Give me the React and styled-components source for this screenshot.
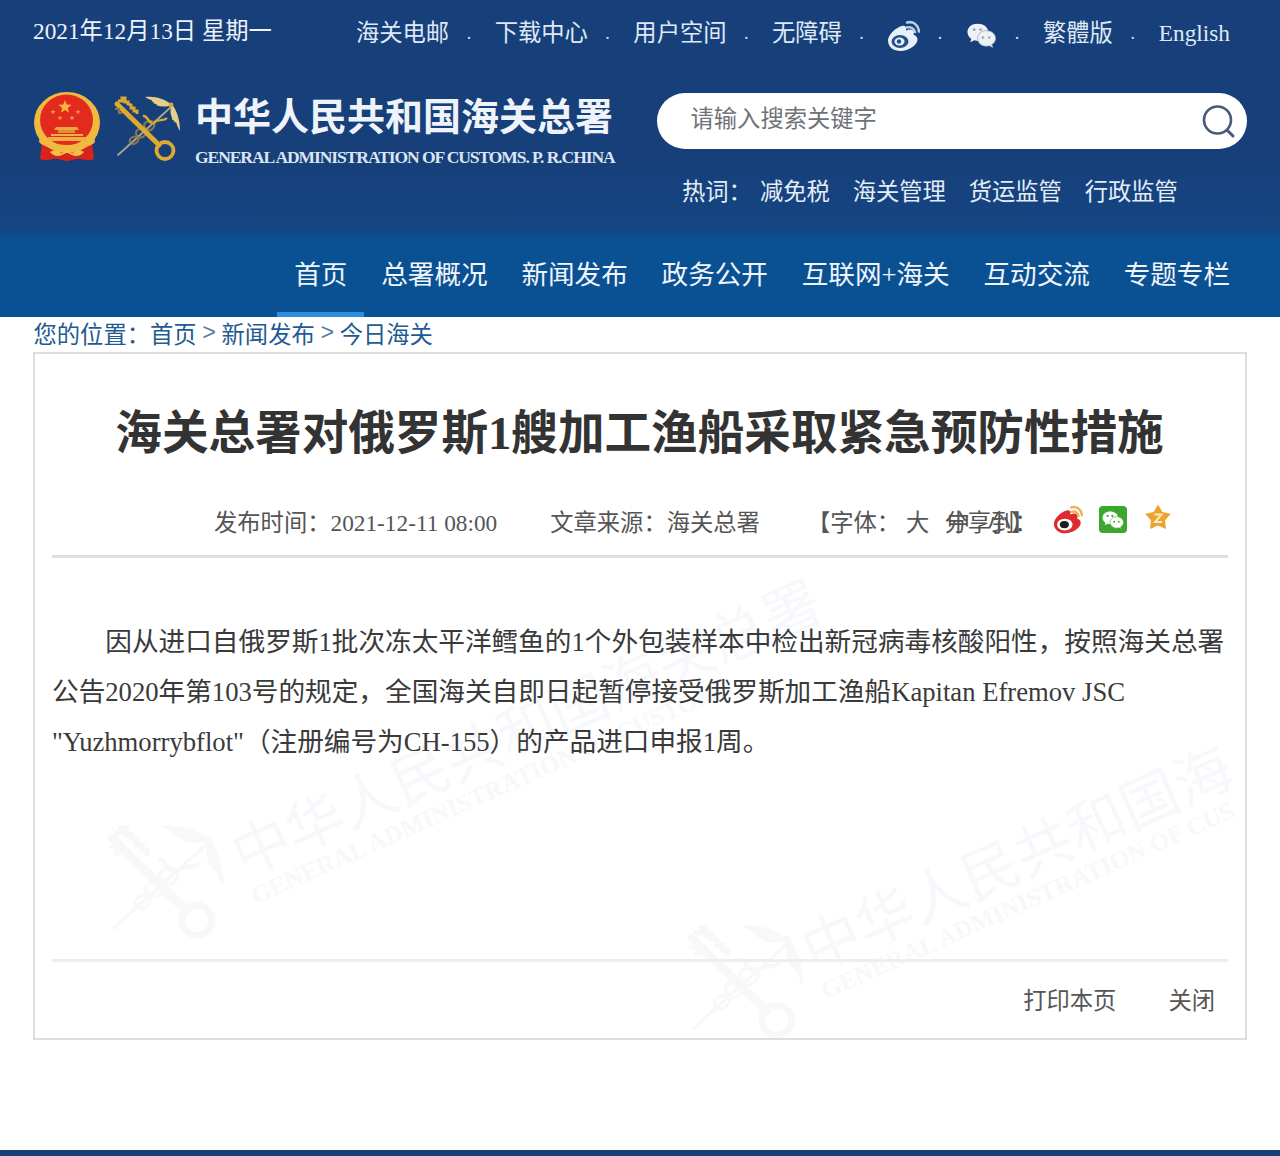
import React from "react";
import styled, { createGlobalStyle } from "styled-components";

const FONT = '"Liberation Serif", "Noto Sans CJK SC", serif';

const Global = createGlobalStyle`
  html, body { margin: 0; padding: 0; background: #fff; }
  body { font-family: ${FONT}; }
  * { box-sizing: border-box; }
`;

const Page = styled.div`
  width: 1280px;
  height: 1156px;
  display: flex;
  flex-direction: column;
  background: #fff;
  overflow: hidden;
`;

const Header = styled.header`
  height: 233px;
  padding: 0 33px;
  display: flex;
  flex-direction: column;
  background: linear-gradient(180deg, #17407b 0%, #17407b 72%, #134683 100%);
`;

const TopRow = styled.div`
  height: 62px;
  display: flex;
  align-items: center;
  justify-content: space-between;
  color: #e4edf7;
  font-size: 23.3px;
`;

const DateText = styled.span`
  color: #eef3f9;
  white-space: nowrap;
  position: relative;
  top: -2px;
`;

const TopLinks = styled.nav`
  display: flex;
  align-items: center;
  margin-right: 17px;
  height: 30px;
`;

const TopLink = styled.a`
  white-space: nowrap;
  color: #dfe9f5;
  display: flex;
  align-items: center;
  position: relative;
  top: ${(p) => p.$dy || 0}px;
`;

const Dot = styled.span`
  width: ${(p) => p.$w || 46}px;
  text-align: center;
  font-size: 18px;
  color: #cfdff0;
  position: relative;
  top: 2px;
  left: -3px;
`;

const BrandRow = styled.div`
  display: flex;
  align-items: flex-start;
  justify-content: space-between;
  padding-top: 28px;
`;

const Brand = styled.div`
  display: flex;
  align-items: flex-start;
`;

const EmblemSvg = styled.svg`
  width: 68px;
  height: 71px;
  margin-top: 2px;
  display: block;
  flex: none;
`;

const KeySvg = styled.svg`
  width: 68px;
  height: 68px;
  margin: 6px 14px 0 12px;
  display: block;
  flex: none;
`;

const BrandText = styled.div`
  display: flex;
  flex-direction: column;
  width: 422px;
`;

const BrandCn = styled.div`
  font-family: "Noto Sans CJK SC", serif;
  font-weight: 700;
  font-size: 38px;
  line-height: 48px;
  color: #eef3f9;
  white-space: nowrap;
`;

const BrandEn = styled.div`
  font-family: "Liberation Serif", serif;
  font-size: 17.5px;
  line-height: 38px;
  font-weight: 700;
  letter-spacing: -1.07px;
  color: #dbe5f1;
  white-space: nowrap;
`;

const SearchColumn = styled.div`
  width: 590px;
  margin-top: 3px;
  display: flex;
  flex-direction: column;
`;

const SearchBox = styled.div`
  height: 56px;
  border-radius: 28px;
  background: #fff;
  display: flex;
  align-items: center;
  justify-content: space-between;
  padding: 0 11px 0 33.5px;
`;

const SearchHint = styled.span`
  font-size: 23.3px;
  color: #6f7378;
  position: relative;
  top: -4px;
`;

const HotRow = styled.div`
  display: flex;
  align-items: center;
  height: 40px;
  margin-top: 21px;
  padding-left: 25px;
  font-size: 23.3px;
  color: #e4edf7;
`;

const HotLabel = styled.span`
  width: 78px;
  white-space: nowrap;
`;

const HotLink = styled.a`
  margin-right: 22.8px;
  white-space: nowrap;
`;

const NavBar = styled.nav`
  height: 84px;
  background: linear-gradient(180deg, #0c4e8f 0%, #0a5194 10%, #0a5194 100%);
  display: flex;
  justify-content: flex-end;
  padding-right: 33px;
`;

const NavItem = styled.a`
  display: flex;
  align-items: center;
  padding: 0 16.9px 1px;
  color: #f1f5fa;
  font-size: 26.6px;
  white-space: nowrap;
  border-bottom: 5px solid ${(p) => (p.$active ? "#2c8fdc" : "transparent")};
  &:last-child { padding-right: 17px; }
`;

const Crumbs = styled.div`
  height: 35px;
  padding: 0 33.5px 4px;
  display: flex;
  align-items: center;
  font-size: 23.3px;
  color: #1f5a92;
  white-space: nowrap;
`;

const CrumbSep = styled.span`
  margin: 0 5.7px;
  font-family: "Liberation Sans", sans-serif;
  color: #5a7d9f;
`;

const Card = styled.main`
  position: relative;
  margin: 0 33px;
  height: 688px;
  border: 2px solid #dedede;
  padding: 0 17px;
  overflow: hidden;
  display: flex;
  flex-direction: column;
`;

const Mark = styled.div`
  position: absolute;
  left: ${(p) => p.$x}px;
  top: ${(p) => p.$y}px;
  transform: rotate(-24deg);
  transform-origin: left top;
  pointer-events: none;
`;

const MarkCn = styled.div`
  font-family: "Noto Sans CJK SC", serif;
  font-weight: 400;
  font-size: 58px;
  line-height: 66px;
  color: #f7f8fb;
  white-space: nowrap;
`;

const MarkEn = styled.div`
  font-family: "Liberation Serif", serif;
  font-size: 25px;
  line-height: 28px;
  font-weight: 700;
  color: #f7f8fb;
  white-space: nowrap;
`;

const MarkKey = styled.svg`
  position: absolute;
  left: ${(p) => p.$x}px;
  top: ${(p) => p.$y}px;
  width: 120px;
  height: 120px;
  pointer-events: none;
`;

const Title = styled.h1`
  position: relative;
  margin: 49px 0 0;
  font-size: 46.6px;
  line-height: 60px;
  font-weight: 700;
  color: #333;
  text-align: center;
  white-space: nowrap;
  left: -0.5px;
  font-family: "Liberation Serif", "Noto Sans CJK SC", serif;
`;

const Meta = styled.div`
  position: relative;
  margin-top: 39px;
  height: 56px;
  padding-bottom: 15px;
  border-bottom: 3px solid #dfdfdf;
  display: flex;
  align-items: center;
  font-size: 23.3px;
  color: #555;
  white-space: nowrap;
`;

const MetaItem = styled.span`
  margin-left: ${(p) => p.$left}px;
`;

const ShareGroup = styled.div`
  position: relative;
  margin-left: ${(p) => p.$left}px;
  display: flex;
  align-items: center;
`;

const ShareLabel = styled.span`
  position: absolute;
  left: ${(p) => p.$left}px;
  top: 50%;
  transform: translateY(-50%);
`;

const ShareIcons = styled.div`
  display: flex;
  align-items: center;
  margin-left: 19px;
  gap: 15px;
  position: relative;
  top: -1px;
`;

const ShareIcon = styled.span`
  width: 30px;
  height: 30px;
  display: block;
`;

const Glyph = styled.svg`
  display: block;
`;

const Body = styled.article`
  position: relative;
  margin-top: 59px;
  height: 342px;
  font-size: 26.65px;
  line-height: 50px;
  color: #3a3a3a;
  text-indent: 2em;
`;

const Paragraph = styled.p`
  margin: 0;
`;

const Footer = styled.footer`
  position: relative;
  border-top: 3px solid #eeeeee;
  height: 79px;
  padding: 0 13px 2px 0;
  display: flex;
  align-items: center;
  justify-content: flex-end;
  font-size: 23.3px;
  color: #555;
  gap: 52px;
`;

const BottomBar = styled.div`
  margin-top: auto;
  height: 6px;
  background: #17407b;
`;

const WeiboGlyph = ({ body, ring, inner, pupil, wave, size = 34 }) => (
  <Glyph width={size} height={size} viewBox="1 1 33 33">
    <path d="M2 21.500c0-5.500 7.500-13 14-14.500 3.500-.7 4.800 1.500 4 4.500 4.500-1.800 8-1.300 8 2 0 1-.5 1.800-.5 2.300 2.300.8 4 2.300 4 4.700C31.500 26 23 32 14.500 32 7.500 32 2 28 2 21.500z" fill={body} />
    <ellipse cx="14" cy="22.500" rx="8.500" ry="6.500" fill={ring} />
    <ellipse cx="13.500" cy="22.500" rx="5" ry="4" fill={inner} />
    <circle cx="13" cy="22.500" r="2.200" fill={pupil} />
    <path d="M21 8.500c4-1 7 1 8 4.500M21 3.500c6-1.500 11 2 12 9" fill="none" stroke={wave} strokeWidth="2.600" strokeLinecap="round" />
  </Glyph>
);

const WechatShapes = ({ fill, eye }) => (
  <>
    <path d="M12 5C6 5 1.500 8.500 1.500 13.500c0 3 1.500 5.200 4 7l-1 3.500 4-2c1.500.4 2.500.6 4 .6C19 22.600 23 18.500 23 13.500 23 8.500 18 5 12 5z" fill={fill} />
    <path d="M21 12c-5 0-9 3.500-9 8s4 8 9 8c1.200 0 2.200-.2 3.200-.5l3.300 1.800-.9-3c2.400-1.500 3.900-3.700 3.900-6.300 0-4.500-4-8-9.500-8z" fill={fill} stroke={eye} strokeWidth="0.800" />
    <circle cx="8.500" cy="11" r="1.500" fill={eye} />
    <circle cx="15" cy="11" r="1.500" fill={eye} />
    <circle cx="17.500" cy="19" r="1.300" fill={eye} />
    <circle cx="24" cy="19" r="1.300" fill={eye} />
  </>
);

const Star = ({ cx, cy, r, fill, inner = 0.42 }) => {
  const pts = [];
  for (let i = 0; i < 10; i++) {
    const a = -Math.PI / 2 + (i * Math.PI) / 5;
    const rr = i % 2 ? r * inner : r;
    pts.push(`${cx + rr * Math.cos(a)},${cy + rr * Math.sin(a)}`);
  }
  return <polygon points={pts.join(" ")} fill={fill} strokeLinejoin="round" />;
};

const Emblem = () => (
  <EmblemSvg viewBox="0 0 68 71">
    <path d="M9 50h50l2 17c-5 2-9 1-13 0-5-1-9 2-14 2s-9-3-14-2c-4 1-8 2-13 0z" fill="#d8231c" />
    <ellipse cx="34" cy="30.500" rx="33" ry="30.500" fill="#f2b941" />
    <ellipse cx="33.500" cy="28" rx="26.500" ry="25.500" fill="#e32a1f" />
    <Star cx={32} cy={15} r={7} fill="#f5b23c" />
    <Star cx={20} cy={20} r={2.600} fill="#ee9a3a" />
    <Star cx={45} cy={20} r={2.600} fill="#ee9a3a" />
    <Star cx={27} cy={26} r={2.600} fill="#ee9a3a" />
    <Star cx={39} cy={26} r={2.600} fill="#ee9a3a" />
    <path d="M23 35h21l2 3H21z" fill="#eda83c" />
    <path d="M25 38h17v3H25z" fill="#dd9136" />
    <path d="M18 42h32v2H18zM15 45h38v4H15z" fill="#efb043" />
    <path d="M7 44c8 12 46 12 54 0l1 6c-8 10-48 10-56 0z" fill="#f2b941" />
    <path d="M17 60c4-3 8-2 11 1 2 2 4-4 6-4s4 6 6 4c3-3 7-4 11-1-3 4-8 5-12 3-3-1-3-2-5-2s-2 1-5 2c-4 2-9 1-12-3z" fill="#f3c04a" />
  </EmblemSvg>
);

const KeyDrawing = ({ gold, dark, shaft, wing }) => (
  <>
    <path d="M5 59L58 11" stroke={shaft} strokeWidth="1.800" strokeLinecap="round" fill="none" />
    <path d="M33 32c-6-4 3-9 7-6 4 4-2 10-6 8M25 40c-6-3 2-10 7-7s-2 10-6 8M18 47c-4-3 2-8 6-6s-1 8-5 7" fill="none" stroke={dark} strokeWidth="2" />
    <path d="M40 28c4-6 10-2 14-6M30 20c5-1 4 6 9 7" fill="none" stroke={gold} strokeWidth="2.400" />
    <path d="M4 8l42 41" stroke={gold} strokeWidth="5" strokeLinecap="round" />
    <path d="M5 5h4v-3h3v4h3v2l3 1v3h3v3h3v3" fill="none" stroke={gold} strokeWidth="3" />
    <path d="M2 13l4 0 0 4 3 0" fill="none" stroke={dark} strokeWidth="2" />
    <circle cx="52" cy="54.500" r="8.500" fill="none" stroke={gold} strokeWidth="3.800" />
    <path d="M59 9c-7-6-16-9-27-8 3 2 5 3 7 3-1 1 0 2 2 2l-1 1c2 1 3 1 4 1l-1 1c5 2 10 2 16 0z" fill={wing} />
    <path d="M59 8c5 7 8 16 8 27-2-3-3-6-4-9-1 1-2 0-2-2-1 1-2 0-2-2-2-5-2-9 0-14z" fill={wing} />
    <circle cx="58" cy="9" r="2.400" fill={gold} />
  </>
);

const Watermark = ({ x, y, cn, en }) => (
  <Mark $x={x} $y={y}>
    <MarkCn>{cn}</MarkCn>
    <MarkEn>{en}</MarkEn>
  </Mark>
);

const SearchIcon = () => (
  <Glyph width="36" height="36" viewBox="0 0 36 36">
    <circle cx="17.500" cy="17" r="13.500" fill="none" stroke="#465a7a" strokeWidth="2.600" />
    <path d="M27 27l6 6" stroke="#465a7a" strokeWidth="3" strokeLinecap="round" />
  </Glyph>
);

export default function App() {
  const faint = { gold: "#f6f8fa", dark: "#f8f9fb", shaft: "#f6f8fa", wing: "#f6f8fa" };
  return (
    <Page>
      <Global />
      <Header>
        <TopRow>
          <DateText>2021年12月13日 星期一</DateText>
          <TopLinks>
            <TopLink>海关电邮</TopLink>
            <Dot $w={45.5}>.</Dot>
            <TopLink>下载中心</TopLink>
            <Dot $w={45.5}>.</Dot>
            <TopLink>用户空间</TopLink>
            <Dot $w={45.5}>.</Dot>
            <TopLink>无障碍</TopLink>
            <Dot $w={45}>.</Dot>
            <TopLink $dy={5}><WeiboGlyph body="#e8eff7" ring="#24508a" inner="#e8eff7" pupil="#24508a" wave="#b9cde2" size={33} /></TopLink>
            <Dot>.</Dot>
            <TopLink $dy={3}>
              <Glyph width="31" height="31" viewBox="0 0 32 32"><WechatShapes fill="#eef2f7" eye="#9aa6b5" /></Glyph>
            </TopLink>
            <Dot>.</Dot>
            <TopLink>繁體版</TopLink>
            <Dot>.</Dot>
            <TopLink $dy={2}>English</TopLink>
          </TopLinks>
        </TopRow>
        <BrandRow>
          <Brand>
            <Emblem />
            <KeySvg viewBox="0 0 68 68">
              <KeyDrawing gold="#dcaa30" dark="#8a7a4a" shaft="#a9a58e" wing="#e6cf86" />
            </KeySvg>
            <BrandText>
              <BrandCn>中华人民共和国海关总署</BrandCn>
              <BrandEn>GENERAL ADMINISTRATION OF CUSTOMS. P. R.CHINA</BrandEn>
            </BrandText>
          </Brand>
          <SearchColumn>
            <SearchBox>
              <SearchHint>请输入搜索关键字</SearchHint>
              <SearchIcon />
            </SearchBox>
            <HotRow>
              <HotLabel>热词：</HotLabel>
              <HotLink>减免税</HotLink>
              <HotLink>海关管理</HotLink>
              <HotLink>货运监管</HotLink>
              <HotLink>行政监管</HotLink>
            </HotRow>
          </SearchColumn>
        </BrandRow>
      </Header>
      <NavBar>
        <NavItem $active>首页</NavItem>
        <NavItem>总署概况</NavItem>
        <NavItem>新闻发布</NavItem>
        <NavItem>政务公开</NavItem>
        <NavItem>互联网+海关</NavItem>
        <NavItem>互动交流</NavItem>
        <NavItem>专题专栏</NavItem>
      </NavBar>
      <Crumbs>
        您的位置：首页<CrumbSep>&gt;</CrumbSep>新闻发布<CrumbSep>&gt;</CrumbSep>今日海关
      </Crumbs>
      <Card>
        <MarkKey $x={70} $y={470} viewBox="0 0 68 68"><KeyDrawing {...faint} /></MarkKey>
        <MarkKey $x={650} $y={570} viewBox="0 0 68 68"><KeyDrawing {...faint} /></MarkKey>
        <Watermark x={185} y={470} cn="中华人民共和国海关总署" en="GENERAL ADMINISTRATION OF CUSTOMS" />
        <Watermark x={755} y={565} cn="中华人民共和国海" en="GENERAL ADMINISTRATION OF CUS" />
        <Title>海关总署对俄罗斯1艘加工渔船采取紧急预防性措施</Title>
        <Meta>
          <MetaItem $left={162}>发布时间：2021-12-11 08:00</MetaItem>
          <MetaItem $left={53}>文章来源：海关总署</MetaItem>
          <ShareGroup $left={47}>
            <span>【字体：&nbsp;大&nbsp;&nbsp;&nbsp;中&nbsp;&nbsp;&nbsp;小】</span>
            <ShareLabel $left={137.5}>分享到：</ShareLabel>
            <ShareIcons>
              <ShareIcon><WeiboGlyph body="#dd2a2a" ring="#fff" inner="#1e1e1e" pupil="#1e1e1e" wave="#e9b35a" size={30} /></ShareIcon>
              <ShareIcon>
                <Glyph width="30" height="30" viewBox="0 0 30 30">
                  <rect x="1" y="1" width="28" height="27" rx="4" fill="#3aa82f" />
                  <g transform="translate(3.500 3) scale(0.72)"><WechatShapes fill="#fff" eye="#3aa82f" /></g>
                </Glyph>
              </ShareIcon>
              <ShareIcon>
                <Glyph width="30" height="30" viewBox="0 0 30 30">
                  <Star cx={15} cy={13} r={13.500} fill="#eda42b" inner={0.55} />
                  <path d="M11.500 9.500h7l-6.500 7.500h7" fill="none" stroke="#fbe9c4" strokeWidth="2" />
                </Glyph>
              </ShareIcon>
            </ShareIcons>
          </ShareGroup>
        </Meta>
        <Body>
          <Paragraph>
            因从进口自俄罗斯1批次冻太平洋鳕鱼的1个外包装样本中检出新冠病毒核酸阳性，按照海关总署公告2020年第103号的规定，全国海关自即日起暂停接受俄罗斯加工渔船Kapitan Efremov JSC "Yuzhmorrybflot"（注册编号为CH-155）的产品进口申报1周。
          </Paragraph>
        </Body>
        <Footer>
          <span>打印本页</span>
          <span>关闭</span>
        </Footer>
      </Card>
      <BottomBar />
    </Page>
  );
}
